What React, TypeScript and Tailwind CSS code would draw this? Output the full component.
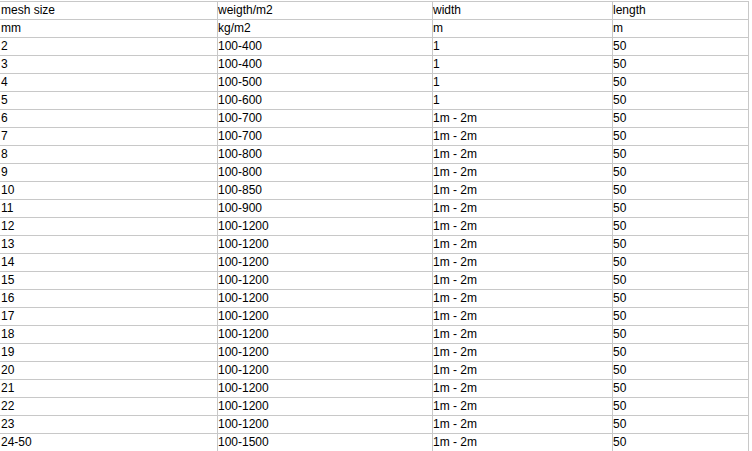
const rows: string[][] = [
  ["mesh size", "weigth/m2", "width", "length"],
  ["mm", "kg/m2", "m", "m"],
  ["2", "100-400", "1", "50"],
  ["3", "100-400", "1", "50"],
  ["4", "100-500", "1", "50"],
  ["5", "100-600", "1", "50"],
  ["6", "100-700", "1m - 2m", "50"],
  ["7", "100-700", "1m - 2m", "50"],
  ["8", "100-800", "1m - 2m", "50"],
  ["9", "100-800", "1m - 2m", "50"],
  ["10", "100-850", "1m - 2m", "50"],
  ["11", "100-900", "1m - 2m", "50"],
  ["12", "100-1200", "1m - 2m", "50"],
  ["13", "100-1200", "1m - 2m", "50"],
  ["14", "100-1200", "1m - 2m", "50"],
  ["15", "100-1200", "1m - 2m", "50"],
  ["16", "100-1200", "1m - 2m", "50"],
  ["17", "100-1200", "1m - 2m", "50"],
  ["18", "100-1200", "1m - 2m", "50"],
  ["19", "100-1200", "1m - 2m", "50"],
  ["20", "100-1200", "1m - 2m", "50"],
  ["21", "100-1200", "1m - 2m", "50"],
  ["22", "100-1200", "1m - 2m", "50"],
  ["23", "100-1200", "1m - 2m", "50"],
  ["24-50", "100-1500", "1m - 2m", "50"],
]

export default function App() {
  return (
    <div
      className="h-[451px] w-[752px] overflow-hidden bg-white pt-px text-[12px] text-black"
      style={{ fontFamily: '"Liberation Sans", Arial, sans-serif' }}
    >
      <div className="grid w-[749px] grid-cols-[218px_215px_180px_136px] border-t border-[#c8c8c8]">
        {rows.map((row, i) =>
          row.map((cell, j) => (
            <div
              key={`${i}-${j}`}
              className={`h-[18px] border-b border-r border-[#c8c8c8] leading-[17px] whitespace-nowrap ${
                j === 0 ? "pl-[1px]" : "pl-0"
              }`}
            >
              {cell}
            </div>
          ))
        )}
      </div>
    </div>
  )
}
